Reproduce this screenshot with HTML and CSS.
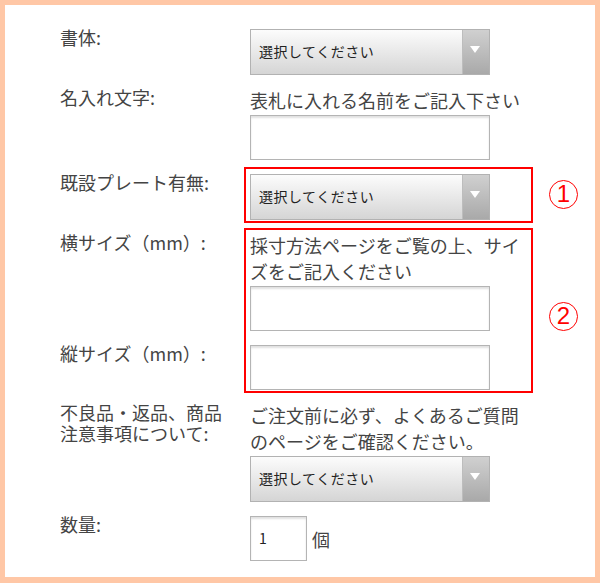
FILE: index.html
```html
<!doctype html>
<html lang="ja">
<head>
	<meta charset="UTF-8">
	<title>名入れ注文フォーム</title>
	<link rel="stylesheet" href="styles.css">
</head>
<body>
	<div class="frame">
		<div class="form">
			<div class="label">書体:</div>
			<div class="field">
				<div class="select"><span class="select_text">選択してください</span><span class="select_arrow"></span></div>
			</div>

			<div class="label">名入れ文字:</div>
			<div class="field">
				<p class="note">表札に入れる名前をご記入下さい</p>
				<div class="input"></div>
			</div>

			<div class="label">既設プレート有無:</div>
			<div class="field">
				<div class="select"><span class="select_text">選択してください</span><span class="select_arrow"></span></div>
			</div>

			<div class="label">横サイズ（mm）:</div>
			<div class="field">
				<p class="note">採寸方法ページをご覧の上、サイズをご記入ください</p>
				<div class="input"></div>
			</div>

			<div class="label">縦サイズ（mm）:</div>
			<div class="field">
				<div class="input"></div>
			</div>

			<div class="label">不良品・返品、商品注意事項について:</div>
			<div class="field">
				<p class="note">ご注文前に必ず、よくあるご質問のページをご確認ください。</p>
				<div class="select"><span class="select_text">選択してください</span><span class="select_arrow"></span></div>
			</div>

			<div class="label">数量:</div>
			<div class="field qty">
				<div class="input input_qty">1</div>
				<span class="unit">個</span>
			</div>
		</div>

		<!-- 注釈 -->
		<div class="mark mark1"></div>
		<div class="mark mark2"></div>
		<span class="num num1">1</span>
		<span class="num num2">2</span>
	</div>
</body>
</html>
```

FILE: styles.css
```css
body, div, p, span{
	margin: 0;
	padding: 0;
}
body{
	font-family: "Noto Sans CJK JP", "Noto Sans", sans-serif;
	background-color: #fff;
}
.frame{
	position: relative;
	width: 600px;
	height: 583px;
	box-sizing: border-box;
	border: 5px solid #ffc7a6;
	border-bottom-width: 6px;
	background-color: #fff;
}
.form{
	display: grid;
	grid-template-columns: 190px 240px;
	row-gap: 14px;
	padding: 24px 0 0 55px;
}
.label{
	margin-top: -2px;
	padding-right: 15px;
	font-size: 18px;
	line-height: 21px;
	color: #444;
}
.field{
	display: flex;
	flex-direction: column;
}
.note{
	margin-top: -2px;
	padding-bottom: 2px;
	font-size: 18px;
	line-height: 26px;
	color: #444;
	width: 280px;
}
.select{
	display: flex;
	height: 46px;
	box-sizing: border-box;
	border: 1px solid #b2b2b2;
	background: linear-gradient(#fcfcfc, #d5d5d5);
}
.select_text{
	flex: 1;
	padding-left: 8px;
	font-size: 14px;
	letter-spacing: 0.5px;
	line-height: 43px;
	color: #222;
}
.select_arrow{
	position: relative;
	width: 26px;
	border-left: 1px solid #bdbdbd;
	background: linear-gradient(#d0d0d0, #a9a9a9);
}
.select_arrow::after{
	content: '';
	position: absolute;
	left: 7px;
	top: 16px;
	border-left: 5px solid transparent;
	border-right: 5px solid transparent;
	border-top: 7px solid #fff;
}
.input{
	height: 45px;
	box-sizing: border-box;
	border: 1px solid #b4b4b4;
	background-color: #fff;
	box-shadow: inset 0 2px 2px rgba(0, 0, 0, 0.12);
}
.qty{
	flex-direction: row;
	align-items: center;
	gap: 5px;
}
.input_qty{
	width: 57px;
	padding-left: 8px;
	font-size: 14px;
	line-height: 43px;
	color: #222;
}
.unit{
	font-size: 18px;
	color: #444;
}
.mark{
	position: absolute;
	left: 239px;
	width: 289px;
	box-sizing: border-box;
	border: 2px solid #f00;
}
.mark1{
	top: 162px;
	height: 56px;
}
.mark2{
	top: 223px;
	height: 165px;
}
.num{
	position: absolute;
	left: 544px;
	width: 29px;
	height: 29px;
	box-sizing: border-box;
	border: 1.5px solid #f00;
	border-radius: 50%;
	font-family: "Liberation Sans", sans-serif;
	font-size: 24px;
	line-height: 26px;
	text-align: center;
	color: #f00;
}
.num1{
	top: 175px;
}
.num2{
	top: 297px;
}
```
